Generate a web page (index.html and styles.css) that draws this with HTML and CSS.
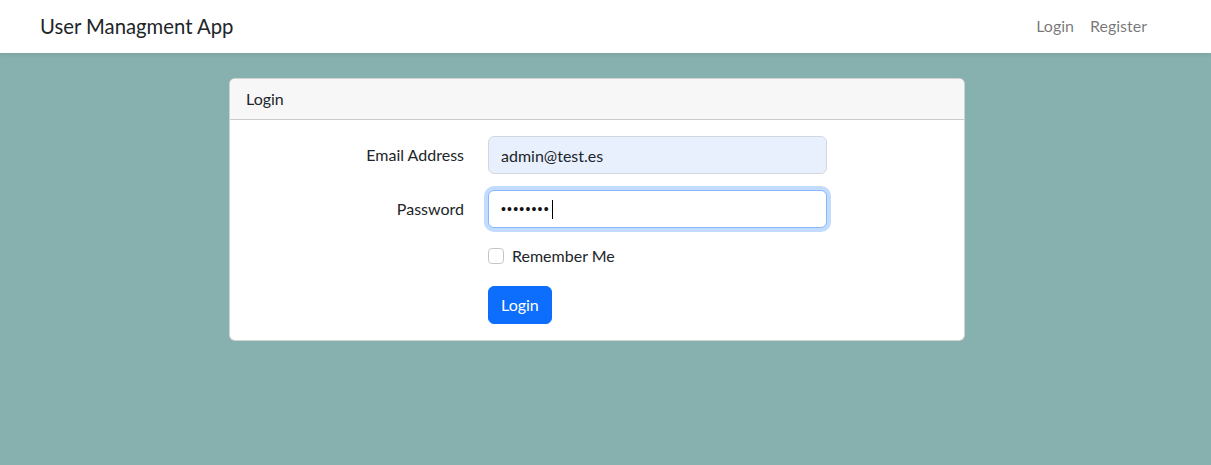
FILE: index.html
```html
<!DOCTYPE html>
<html lang="en">
<head>
<meta charset="utf-8">
<title>User Managment App</title>
<link rel="stylesheet" href="styles.css">
</head>
<body>
<nav class="navbar">
  <div class="container nav-inner">
    <a class="brand" href="#">User Managment App</a>
    <ul class="nav-links">
      <li><a class="nav-link" href="#">Login</a></li>
      <li><a class="nav-link" href="#">Register</a></li>
    </ul>
  </div>
</nav>
<main class="main">
  <div class="container row-center">
    <div class="card">
      <div class="card-header">Login</div>
      <form class="card-body">
        <label class="form-label" for="email">Email Address</label>
        <input class="form-control autofill" id="email" type="email" value="admin@test.es">

        <label class="form-label" for="password">Password</label>
        <div class="field-wrap">
          <input class="form-control focused" id="password" type="password" value="12345678">
          <span class="caret"></span>
        </div>

        <div class="form-check">
          <input class="check-input" type="checkbox" id="remember">
          <label class="check-label" for="remember">Remember Me</label>
        </div>

        <div class="actions">
          <button type="submit" class="btn-primary">Login</button>
        </div>
      </form>
    </div>
  </div>
</main>
</body>
</html>
```
FILE: styles.css
```css
* { box-sizing: border-box; }

html, body {
  margin: 0;
  padding: 0;
}

body {
  background: #87b1ae;
  font-family: "Lato", "Liberation Sans", sans-serif;
  font-size: 16px;
  line-height: 24px;
  color: #212529;
  min-height: 465px;
}

.container {
  width: 1140px;
  padding: 0 12px;
  margin-left: 27px;
}

.navbar {
  background: #fff;
  height: 53px;
  box-shadow: 0 2px 4px rgba(0, 0, 0, 0.075);
}

.nav-inner {
  height: 53px;
  display: flex;
  align-items: center;
  justify-content: space-between;
}

.brand {
  font-size: 20.3px;
  line-height: 30px;
  color: #212529;
  text-decoration: none;
  margin-left: 1px;
  margin-top: -1px;
}

.nav-links {
  list-style: none;
  margin: -1px 0 0;
  padding: 0;
  display: flex;
}

.nav-link {
  display: block;
  padding: 0 8px;
  color: rgba(0, 0, 0, 0.55);
  text-decoration: none;
}

.main {
  padding-top: 25px;
}

.row-center {
  display: flex;
  justify-content: center;
}

.card {
  width: 736px;
  background: #fff;
  border: 1px solid rgba(0, 0, 0, 0.175);
  border-radius: 6px;
  overflow: hidden;
}

.card-header {
  background: #f7f7f7;
  padding: 8px 16px;
  border-bottom: 1px solid rgba(0, 0, 0, 0.175);
  line-height: 24px;
}

.card-body {
  margin: 0;
  padding: 16px;
  display: grid;
  grid-template-columns: 218px 339px;
  column-gap: 24px;
  row-gap: 16px;
  align-items: center;
}

.form-label {
  text-align: right;
}

.form-control {
  display: block;
  width: 339px;
  height: 38px;
  padding: 6px 12px;
  font-family: inherit;
  font-size: 16px;
  line-height: 24px;
  color: #212529;
  background: #fff;
  border: 1px solid #dee2e6;
  border-radius: 6px;
  outline: none;
}

.form-control.autofill {
  background: #e8f0fe;
  border-color: #d3d8de;
}

.form-control.focused {
  border-color: #86b7fe;
  box-shadow: 0 0 0 4px rgba(13, 110, 253, 0.25);
  font-family: "Liberation Sans", sans-serif;
  font-size: 14px;
  letter-spacing: 1.2px;
  color: #111;
}

.field-wrap {
  position: relative;
}

.caret {
  position: absolute;
  left: 64px;
  top: 10px;
  width: 1px;
  height: 19px;
  background: #000;
}

.form-check {
  grid-column: 2;
  display: flex;
  align-items: center;
  gap: 8px;
  min-height: 24px;
  margin-bottom: 2px;
}

.check-input {
  appearance: none;
  -webkit-appearance: none;
  width: 16px;
  height: 16px;
  margin: 0;
  border: 1px solid #c4c7ca;
  border-radius: 4px;
  background: #fff;
}

.actions {
  grid-column: 2;
}

.btn-primary {
  font-family: inherit;
  font-size: 16px;
  line-height: 24px;
  padding: 6px 12px;
  height: 38px;
  color: #fff;
  background: #0d6efd;
  border: 1px solid #0d6efd;
  border-radius: 6px;
}
```
